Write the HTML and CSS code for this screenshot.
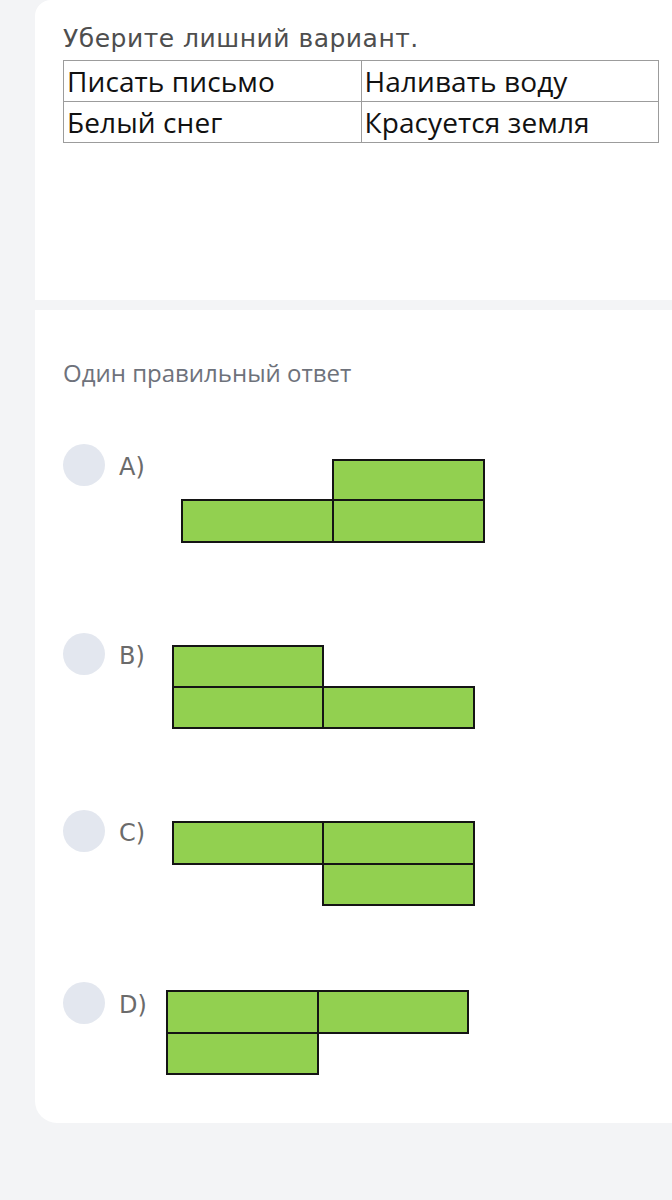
FILE: index.html
```html
<!DOCTYPE html>
<html lang="ru">
<head>
<meta charset="utf-8">
<link rel="stylesheet" href="styles.css">
</head>
<body>
<div class="page">
  <section class="card card-question">
    <h1 class="title">Уберите лишний вариант.</h1>
    <table class="words">
      <tr><td>Писать письмо</td><td>Наливать воду</td></tr>
      <tr><td>Белый снег</td><td>Красуется земля</td></tr>
    </table>
  </section>
  <section class="card card-answers">
    <p class="hint">Один правильный ответ</p>
    <div class="option opt-a">
      <span class="radio"></span><span class="label">A)</span>
      <svg class="fig" width="305" height="85" viewBox="0 0 305 85">
        <g fill="#92d050" stroke="#141414" stroke-width="2">
          <rect x="152" y="1" width="151" height="40"/>
          <rect x="1" y="41" width="151" height="42"/>
          <rect x="152" y="41" width="151" height="42"/>
        </g>
      </svg>
    </div>
    <div class="option opt-b">
      <span class="radio"></span><span class="label">B)</span>
      <svg class="fig" width="304" height="85" viewBox="0 0 304 85">
        <g fill="#92d050" stroke="#141414" stroke-width="2">
          <rect x="1" y="1" width="150" height="41"/>
          <rect x="1" y="42" width="150" height="41"/>
          <rect x="151" y="42" width="151" height="41"/>
        </g>
      </svg>
    </div>
    <div class="option opt-c">
      <span class="radio"></span><span class="label">C)</span>
      <svg class="fig" width="304" height="86" viewBox="0 0 304 86">
        <g fill="#92d050" stroke="#141414" stroke-width="2">
          <rect x="1" y="1" width="150" height="42"/>
          <rect x="151" y="1" width="151" height="42"/>
          <rect x="151" y="43" width="151" height="41"/>
        </g>
      </svg>
    </div>
    <div class="option opt-d">
      <span class="radio"></span><span class="label">D)</span>
      <svg class="fig" width="304" height="86" viewBox="0 0 304 86">
        <g fill="#92d050" stroke="#141414" stroke-width="2">
          <rect x="1" y="1" width="151" height="42"/>
          <rect x="152" y="1" width="150" height="42"/>
          <rect x="1" y="43" width="151" height="41"/>
        </g>
      </svg>
    </div>
  </section>
</div>
</body>
</html>
```
FILE: styles.css
```css
html, body {
  margin: 0;
  padding: 0;
  background: #f3f4f6;
}
body {
  font-family: "DejaVu Sans", "Open Sans", sans-serif;
  width: 672px;
  height: 1200px;
  overflow: hidden;
}
.page {
  padding-left: 35px;
  display: flex;
  flex-direction: column;
  gap: 10px;
}
.card {
  background: #ffffff;
  width: 660px;
  box-sizing: border-box;
  padding-left: 28px;
}
.card-question {
  height: 300px;
  border-top-left-radius: 16px;
  padding-top: 24px;
}
.title {
  margin: 0;
  font-weight: 400;
  font-size: 25px;
  line-height: 30px;
  letter-spacing: 0.5px;
  color: #4e4e4e;
}
.words {
  margin-top: 6px;
  border-collapse: collapse;
  width: 596px;
  table-layout: fixed;
}
.words td {
  border: 1px solid #9c9c9c;
  height: 37px;
  padding: 3px 0 0 3px;
  font-family: "Open Sans", "DejaVu Sans", sans-serif;
  font-size: 28px;
  line-height: 34px;
  letter-spacing: 0.1px;
  color: #111;
  vertical-align: top;
}
.card-answers {
  border-bottom-left-radius: 22px;
  padding-top: 48px;
  padding-bottom: 47px;
}
.hint {
  margin: 0;
  font-family: "Open Sans", "DejaVu Sans", sans-serif;
  font-size: 24px;
  line-height: 30px;
  color: #6e727b;
}
.option {
  display: flex;
  align-items: flex-start;
}
.radio {
  width: 42px;
  height: 42px;
  border-radius: 50%;
  background: #e3e7ef;
  flex: none;
}
.label {
  width: 40px;
  margin-left: 14px;
  font-size: 24px;
  line-height: 46px;
  color: #6b6b6b;
  flex: none;
}
.opt-a { margin-top: 56px; height: 189px; }
.opt-b { height: 177px; }
.opt-c { height: 172px; }
.opt-a .fig { margin-left: 22px; margin-top: 15px; }
.opt-b .fig { margin-left: 13px; margin-top: 12px; }
.opt-c .fig { margin-left: 13px; margin-top: 11px; }
.opt-d .fig { margin-left: 7px; margin-top: 8px; }
```
